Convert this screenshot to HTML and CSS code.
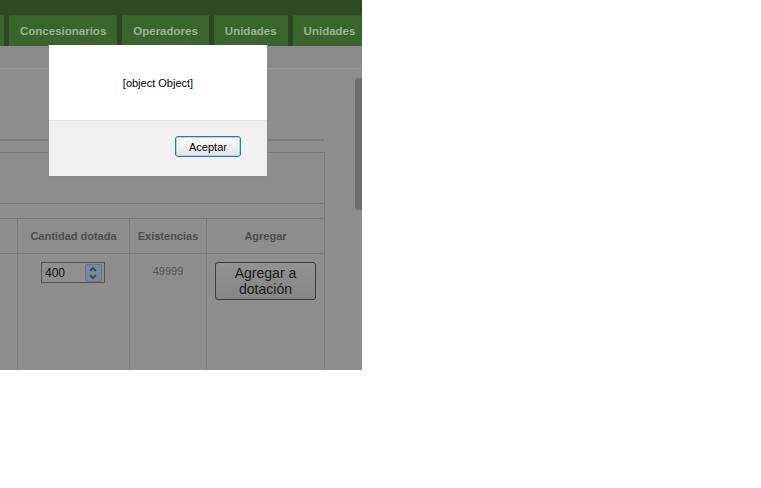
FILE: index.html
```html
<!DOCTYPE html>
<html lang="es">
<head>
    <meta charset="UTF-8">
    <title>Dotación</title>
    <link rel="stylesheet" href="styles.css">
</head>
<body>
    <div class="screen">
        <div class="topbar"></div>
        <nav class="tabs">
            <span class="tab tab-cut"></span>
            <span class="tab">Concesionarios</span>
            <span class="tab">Operadores</span>
            <span class="tab">Unidades</span>
            <span class="tab">Unidades</span>
        </nav>
        <div class="subbar"></div>

        <div class="content">
            <div class="rule"></div>
            <table class="grid">
                <colgroup>
                    <col class="c0">
                    <col class="c1">
                    <col class="c2">
                    <col class="c3">
                </colgroup>
                <tr class="row-top"><td colspan="4"></td></tr>
                <tr class="row-gap"><td colspan="4"></td></tr>
                <tr class="row-head">
                    <th></th>
                    <th>Cantidad dotada</th>
                    <th>Existencias</th>
                    <th>Agregar</th>
                </tr>
                <tr class="row-data">
                    <td></td>
                    <td>
                        <div class="spin">
                            <span class="spin-val">400</span>
                            <span class="spin-btn">
                                <svg width="14" height="16" viewBox="0 0 14 16">
                                    <path d="M4 6 L7 3 L10 6" fill="none" stroke="#2f3c52" stroke-width="1.6"/>
                                    <path d="M4 10 L7 13 L10 10" fill="none" stroke="#2f3c52" stroke-width="1.6"/>
                                </svg>
                            </span>
                        </div>
                    </td>
                    <td class="stock">49999</td>
                    <td><button class="add-btn">Agregar a dotación</button></td>
                </tr>
            </table>
        </div>

        <div class="scroll-thumb"></div>

        <div class="dialog">
            <div class="dialog-body">[object Object]</div>
            <div class="dialog-foot">
                <button class="ok-btn">Aceptar</button>
            </div>
        </div>
    </div>
</body>
</html>
```

FILE: styles.css
```css
body {
    margin: 0;
    background-color: white;
    font-family: 'Liberation Sans', Arial, sans-serif;
}
.screen {
    position: relative;
    width: 362px;
    height: 370px;
    overflow: hidden;
    background-color: #8d8d8d;
}
.topbar {
    height: 15px;
    background-color: #2d4b22;
}
.tabs {
    display: flex;
    gap: 5px;
    height: 31px;
    background-color: #2b4821;
    white-space: nowrap;
}
.tab {
    flex-shrink: 0;
    display: flex;
    align-items: center;
    padding: 0 11px;
    background-color: #3a662d;
    color: #9db394;
    font-size: 11.5px;
    font-weight: bold;
    border-top: 1px solid #345d29;
}
.tab-cut {
    width: 4px;
    padding: 0;
}
.subbar {
    height: 22px;
    background-color: #8b8b8b;
    border-bottom: 1px solid #999;
}
.content {
    padding-top: 70px;
}
.rule {
    width: 324px;
    height: 2px;
    background-color: #7b7b7b;
}
.grid {
    margin-top: 11px;
    margin-left: -100px;
    width: 425px;
    border-collapse: collapse;
    table-layout: fixed;
    border: 1px solid #7a7a7a;
}
.c0 { width: 117px; }
.c1 { width: 112px; }
.c2 { width: 77px; }
.c3 { width: 118px; }
.grid td, .grid th {
    padding: 0;
    border: 1px solid #7a7a7a;
}
.row-top td { height: 50px; }
.row-gap td { height: 14px; }
.row-head th {
    height: 34px;
    font-size: 11px;
    font-weight: bold;
    color: #4e4e4e;
    text-align: center;
}
.row-data td {
    height: 130px;
    vertical-align: top;
    text-align: center;
}
.spin {
    display: flex;
    align-items: center;
    justify-content: space-between;
    box-sizing: border-box;
    width: 64px;
    height: 21px;
    margin: 8px 0 0 23px;
    padding: 0 2px 0 3px;
    border: 1px solid #555;
    background-color: #8f8f8f;
    font-size: 12px;
    color: #111;
}
.spin-btn {
    display: flex;
    width: 15px;
    height: 16px;
    background-color: #7b8699;
    border: 1px solid #6a7488;
    border-radius: 2px;
}
.stock {
    padding-top: 11px !important;
    font-size: 11px;
    color: #555;
}
.add-btn {
    width: 101px;
    height: 38px;
    margin-top: 8px;
    padding: 0;
    border: 1px solid #3a3a3a;
    border-radius: 3px;
    background: linear-gradient(#929292, #858585);
    color: #1c1c1c;
    font-family: 'Liberation Sans', Arial, sans-serif;
    font-size: 14px;
    line-height: 16px;
}
.scroll-thumb {
    position: absolute;
    top: 78px;
    left: 355px;
    width: 7px;
    height: 132px;
    border-radius: 3px 0 0 3px;
    background-color: #6e6e6e;
}
.dialog {
    position: absolute;
    left: 48px;
    top: 45px;
    width: 218px;
    border: 1px solid #8a8a8a;
    border-top: none;
    background-color: #f0f0f0;
}
.dialog-body {
    height: 75px;
    display: flex;
    align-items: center;
    justify-content: center;
    background-color: white;
    border-bottom: 1px solid #e6e6e6;
    font-size: 11px;
    color: #000;
}
.dialog-foot {
    display: flex;
    justify-content: flex-end;
    height: 55px;
    padding: 15px 26px 0 0;
    box-sizing: border-box;
}
.ok-btn {
    width: 66px;
    height: 21px;
    padding: 0;
    border: 1px solid #3a74ad;
    border-radius: 3px;
    background: linear-gradient(#fbfbfb, #e4e4e4);
    box-shadow: inset 0 0 0 1px #a9d3f3;
    font-family: 'Liberation Sans', Arial, sans-serif;
    font-size: 11px;
    color: #000;
}
```
